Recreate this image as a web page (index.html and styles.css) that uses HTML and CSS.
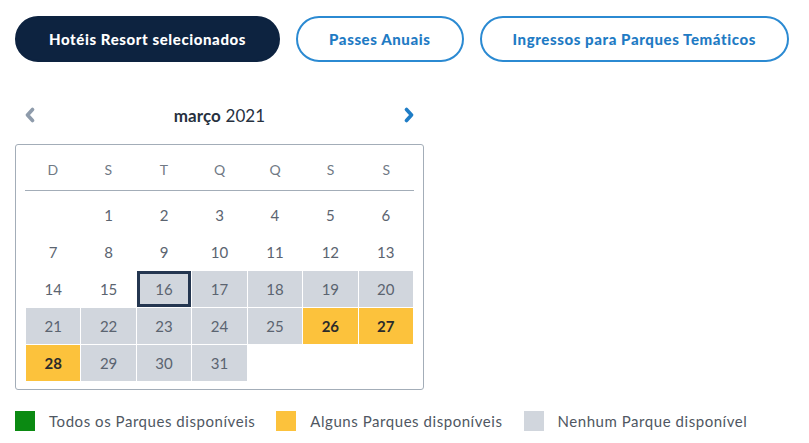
FILE: index.html
```html
<!DOCTYPE html>
<html lang="pt">
<head>
<meta charset="utf-8">
<title>Calendário</title>
<link rel="stylesheet" href="styles.css">
</head>
<body>
<div class="page">
  <div class="tabs">
    <button class="tab tab-active">Hotéis Resort selecionados</button>
    <button class="tab">Passes Anuais</button>
    <button class="tab">Ingressos para Parques Temáticos</button>
  </div>

  <div class="cal-wrap">
    <div class="cal-nav">
      <span class="nav-btn nav-prev">
        <svg width="12" height="16" viewBox="0 0 12 16"><polyline points="8.5,2.5 3.5,8 8.5,13.5" fill="none" stroke="#8e9bab" stroke-width="3.6" stroke-linecap="round" stroke-linejoin="round"/></svg>
      </span>
      <span class="cal-title"><b>março</b> 2021</span>
      <span class="nav-btn nav-next">
        <svg width="12" height="16" viewBox="0 0 12 16"><polyline points="3.5,2.5 8.5,8 3.5,13.5" fill="none" stroke="#1f7dc6" stroke-width="3.6" stroke-linecap="round" stroke-linejoin="round"/></svg>
      </span>
    </div>

    <div class="cal-box">
      <div class="cal-head">
        <span>D</span><span>S</span><span>T</span><span>Q</span><span>Q</span><span>S</span><span>S</span>
      </div>
      <div class="cal-grid">
        <span class="day empty"></span>
        <span class="day">1</span>
        <span class="day">2</span>
        <span class="day">3</span>
        <span class="day">4</span>
        <span class="day">5</span>
        <span class="day">6</span>
        <span class="day">7</span>
        <span class="day">8</span>
        <span class="day">9</span>
        <span class="day">10</span>
        <span class="day">11</span>
        <span class="day">12</span>
        <span class="day">13</span>
        <span class="day">14</span>
        <span class="day">15</span>
        <span class="day none today">16</span>
        <span class="day none">17</span>
        <span class="day none">18</span>
        <span class="day none">19</span>
        <span class="day none">20</span>
        <span class="day none">21</span>
        <span class="day none">22</span>
        <span class="day none">23</span>
        <span class="day none">24</span>
        <span class="day none">25</span>
        <span class="day some">26</span>
        <span class="day some">27</span>
        <span class="day some">28</span>
        <span class="day none">29</span>
        <span class="day none">30</span>
        <span class="day none">31</span>
      </div>
    </div>
  </div>

  <div class="legend">
    <span class="legend-item"><span class="swatch sw-all"></span>Todos os Parques disponíveis</span>
    <span class="legend-item"><span class="swatch sw-some"></span>Alguns Parques disponíveis</span>
    <span class="legend-item"><span class="swatch sw-none"></span>Nenhum Parque disponível</span>
  </div>
</div>
</body>
</html>
```

FILE: styles.css
```css
* { box-sizing: border-box; }

body {
  margin: 0;
  background: #fff;
  font-family: Lato, "Noto Sans", sans-serif;
  color: #5b6470;
}

.page {
  padding: 16px 0 0 15px;
}

.tabs {
  display: flex;
  gap: 16px;
}

.tab {
  height: 46px;
  padding: 0 31px;
  border-radius: 23px;
  border: 2px solid #2b8ad2;
  background: #fff;
  color: #1f7bc4;
  font-family: Lato, "Noto Sans", sans-serif;
  font-weight: 900;
  font-size: 15px;
  letter-spacing: 0.6px;
  cursor: pointer;
}

.tab-active {
  background: #0d2340;
  border-color: #0d2340;
  color: #fff;
  padding: 0 32px;
}

.cal-wrap {
  width: 409px;
  margin-top: 34px;
}

.cal-nav {
  height: 38px;
  display: flex;
  align-items: center;
  justify-content: space-between;
  padding: 0 9px 0 9px;
}

.nav-btn {
  display: flex;
  width: 12px;
  height: 16px;
}

.cal-title {
  font-size: 17px;
  color: #27313f;
  font-weight: 400;
  letter-spacing: 0.1px;
}

.cal-title b {
  font-weight: 700;
}

.cal-box {
  margin-top: 10px;
  border: 1px solid #a3adb8;
  border-radius: 3px;
  padding: 0 9px 8px 9px;
}

.cal-head {
  display: grid;
  grid-template-columns: repeat(7, 1fr);
  height: 46px;
  align-items: center;
  border-bottom: 1px solid #a3adb8;
  font-size: 14px;
  color: #707985;
  text-align: center;
  padding-top: 3px;
}

.cal-grid {
  display: grid;
  grid-template-columns: repeat(7, 1fr);
  grid-auto-rows: 36px;
  gap: 1px;
  margin-top: 6px;
  padding: 0 1px 0 1px;
}

.day {
  display: flex;
  align-items: center;
  justify-content: center;
  font-size: 15px;
  color: #5b6470;
}

.day.none {
  background: #d1d6dd;
}

.day.some {
  background: #fcc23c;
  color: #2b2b2b;
  font-weight: 700;
}

.day.today {
  border: 3px solid #243650;
}

.legend {
  display: flex;
  gap: 21px;
  margin-top: 21px;
  font-size: 15px;
  letter-spacing: 0.55px;
  color: #4f5762;
}

.legend-item {
  display: flex;
  align-items: center;
  gap: 14px;
}

.swatch {
  width: 20px;
  height: 20px;
  display: inline-block;
}

.sw-all { background: #0b8a12; }
.sw-some { background: #fcc23c; }
.sw-none { background: #d1d6dd; }
```
